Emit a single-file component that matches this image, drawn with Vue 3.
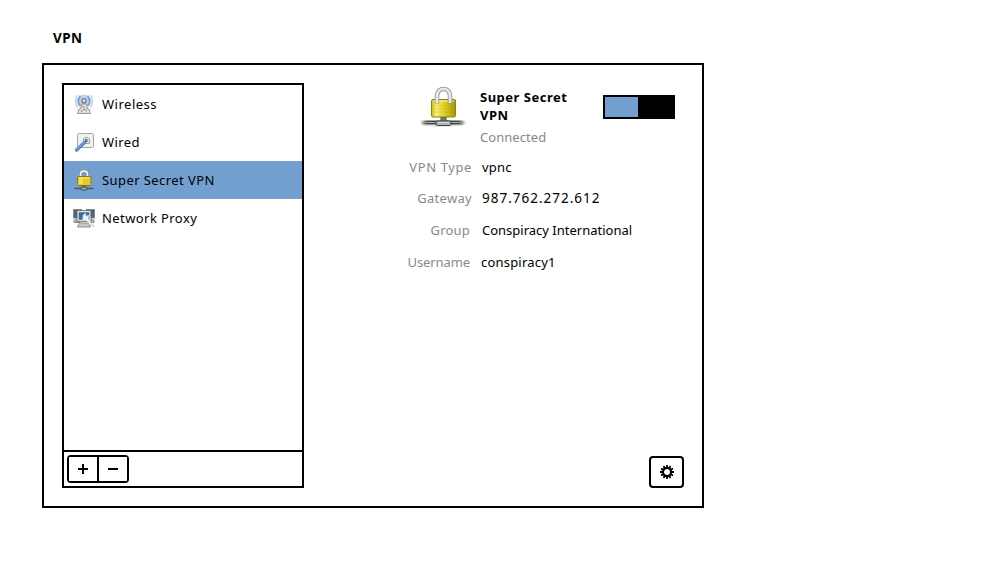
<script setup>
const connections = [
  { name: 'Wireless', icon: 'wireless' },
  { name: 'Wired', icon: 'wired' },
  { name: 'Super Secret VPN', icon: 'vpn', selected: true },
  { name: 'Network Proxy', icon: 'proxy' },
]
const details = [
  { key: 'type', label: 'VPN Type', value: 'vpnc' },
  { key: 'gateway', label: 'Gateway', value: '987.762.272.612' },
  { key: 'group', label: 'Group', value: 'Conspiracy International' },
  { key: 'user', label: 'Username', value: 'conspiracy1' },
]
</script>

<template>
  <main class="page">
    <h1>VPN</h1>
    <section class="window">
      <aside class="sidebar">
        <ul class="list">
          <li v-for="c in connections" :key="c.icon" :class="['row', c.icon, { selected: c.selected }]">
            <svg v-if="c.icon === 'wireless'" class="icon" viewBox="0 0 24 24" fill="none">
              <ellipse cx="12" cy="9" rx="7" ry="6.500" fill="#c3d6ee" />
              <path d="M5.500 3C3 6 3 12 5.500 15.500M18.500 3c2.500 3 2.500 9 0 12.500" stroke="#c3d4ea" stroke-width="1.600" />
              <path d="M8.500 4C6 7 6 11 8 14M15.500 4c2.500 3 2.500 7 .5 10" stroke="#84a9d8" stroke-width="2.200" />
              <path d="M9.500 12h5l1 5h1.500l1.500 4.500H5.500L7 17h1.500z" fill="#dededb" stroke="#999a96" />
              <path d="M9 20l3-3 3 2M10 14l3 2" stroke="#8f918e" />
              <circle cx="12" cy="8.700" r="2.200" fill="#d5d7d5" stroke="#737876" stroke-width="1.200" />
            </svg>
            <svg v-else-if="c.icon === 'wired'" class="icon" viewBox="0 0 24 24" fill="none">
              <rect x="5.500" y="3.500" width="16" height="14" rx="1" fill="#f1f1ef" stroke="#a5a7a2" />
              <path d="M11.500 13.500V9l1.500-1.500h3L17.500 9v4.500z" fill="#dfe2e4" stroke="#a1a6ab" />
              <path d="M3.500 21L13.500 11.500" stroke="#4c7fbc" stroke-width="3.200" />
              <path d="M4 20L13 11.500" stroke="#79a4d5" stroke-width="1.200" />
              <rect x="13" y="9" width="2.500" height="3" fill="#5379a3" />
            </svg>
            <svg v-else-if="c.icon === 'vpn'" class="icon" viewBox="0 0 24 24" fill="none">
              <path d="M2.500 20.500h19" stroke="#4c5356" stroke-width="1.400" />
              <path d="M12 17v3" stroke="#555" stroke-width="3" />
              <rect x="9" y="19" width="6" height="3" rx="1" fill="#a6a9a7" stroke="#454b4d" />
              <path d="M8.500 9V6.500C8.500 2 15.500 2 15.500 6.500V9" stroke="#81857f" stroke-width="3" />
              <path d="M8.500 9V6.500C8.500 2 15.500 2 15.500 6.500V9" stroke="#f4f4f0" stroke-width="1.700" />
              <rect x="5.500" y="8.500" width="13.500" height="9" rx="1" fill="#e3ca32" stroke="#927909" />
              <path d="M7 10h10" stroke="#fff27c" />
              <path d="M7 11h4v5H7z" fill="#f1e252" />
            </svg>
            <svg v-else class="icon" viewBox="0 0 24 24" fill="none">
              <rect x="1.500" y="3.500" width="8" height="8.500" fill="#47657f" stroke="#868a87" />
              <rect x="14.500" y="3.500" width="8" height="8.500" fill="#47657f" stroke="#868a87" />
              <path d="M2 14h6v2.500H2zM16 14h6v2.500h-6z" fill="#bfc1be" stroke="#8b8e8a" />
              <rect x="6" y="5.500" width="12" height="9" fill="#396b9e" stroke="#e2e4e0" stroke-width="1.500" />
              <path d="M4.800 4.500h14.400v11H4.800z" stroke="#666b69" stroke-width=".8" />
              <path d="M7.500 17h9l2 4H5.500z" fill="#c9cbc7" stroke="#8d908c" />
              <path d="M11 9l2.500-2 .5 3 3-1-.5 4 6 8-4-2-5-5-3 1z" fill="#f3f4f1" stroke="#b5b7b2" stroke-width=".5" />
            </svg>
            <span>{{ c.name }}</span>
          </li>
        </ul>
        <footer class="tools">
          <div class="pair">
            <button aria-label="Add"><svg viewBox="0 0 12 12"><path d="M1 6h10M6 1v10" /></svg></button>
            <button aria-label="Remove"><svg viewBox="0 0 12 12"><path d="M1 6h10" /></svg></button>
          </div>
        </footer>
      </aside>
      <section class="panel">
        <header class="head">
          <svg class="lock" viewBox="0 0 48 44" fill="none">
            <defs>
              <linearGradient id="gold" x2="1">
                <stop stop-color="#c6b70c" /><stop offset=".18" stop-color="#f9f074" />
                <stop offset=".5" stop-color="#e2d42a" /><stop offset="1" stop-color="#a99605" />
              </linearGradient>
              <linearGradient id="wire" x2="1">
                <stop stop-color="#555" stop-opacity="0" /><stop offset=".15" stop-color="#444a4a" />
                <stop offset=".85" stop-color="#444a4a" /><stop offset="1" stop-color="#555" stop-opacity="0" />
              </linearGradient>
            </defs>
            <ellipse cx="24" cy="38.500" rx="21" ry="2.500" fill="#e2e2e2" />
            <rect x="1" y="34.500" width="46" height="4" fill="url(#wire)" />
            <path d="M6 36.500h36" stroke="#a5a8a6" />
            <path d="M22 31h5v5h-5z" fill="#777c79" stroke="#454a48" />
            <rect x="17" y="35" width="15" height="4.500" rx="1.500" fill="#aeb1ae" stroke="#404644" />
            <path d="M19 36.500h11" stroke="#dcdedb" />
            <rect x="12.500" y="13.500" width="24" height="17.500" rx="1.500" fill="url(#gold)" stroke="#928108" />
            <path d="M14 15h21" stroke="#fff9a0" />
            <path d="M14 20h21M14 23h21M14 26h21" stroke="#a99908" stroke-opacity=".25" />
            <path d="M18 17.500V10C18 .500 31 .500 31 10V17.500" stroke="#91938f" stroke-width="4.500" />
            <path d="M18 17V10C18 .500 31 .500 31 10V17" stroke="#e9eae7" stroke-width="2.800" />
          </svg>
          <div class="title">
            <h2>Super Secret<br><span class="second">VPN</span></h2>
            <p>Connected</p>
          </div>
          <div class="switch" role="switch" aria-checked="true"><i></i></div>
        </header>
        <dl>
          <div v-for="d in details" :key="d.key" :class="['detail', d.key]">
            <dt>{{ d.label }}</dt><dd>{{ d.value }}</dd>
          </div>
        </dl>
        <button class="gear" aria-label="Options">
          <svg viewBox="0 0 16 16">
            <circle cx="8" cy="8" r="4.100" fill="none" stroke="#000" stroke-width="2.200" />
            <path d="M8 1v3M8 12v3M1 8h3M12 8h3M4.500 2l1.400 2.400M10.100 11.600l1.400 2.400M11.500 2l-1.400 2.400M5.900 11.600L4.500 14M2 4.500l2.400 1.400M11.600 10.100l2.400 1.400M2 11.500l2.400-1.400M11.600 5.900L14 4.500" stroke="#000" stroke-width="1.800" />
          </svg>
        </button>
      </section>
    </section>
  </main>
</template>

<style>
body { background: #fff; }
</style>
<style scoped>
* { box-sizing: border-box; }
h1, h2, p, ul, dl, dd { margin: 0; padding: 0; }
.page { width: 1002px; height: 583px; padding: 28px 0 0 42px; font: 13px/20px "Noto Sans", sans-serif; color: #000; }
h1 { height: 35px; padding-left: 11px; font-size: 13.500px; line-height: 20px; font-weight: 700; letter-spacing: .4px; }
.window { width: 662px; height: 445px; border: 2px solid #000; padding: 18px; display: flex; }
.sidebar { width: 242px; height: 405px; border: 2px solid #000; display: flex; flex-direction: column; }
.list { flex: 1; list-style: none; }
.row { height: 38px; display: flex; align-items: center; padding-left: 8px; white-space: nowrap; letter-spacing: .42px; }
.row.wireless { letter-spacing: .5px; }
.row span { padding-left: 6px; }
.selected { background: #729fcf; }
.icon { width: 24px; height: 24px; flex: none; }
.tools { height: 36px; border-top: 2px solid #000; padding: 3px; }
.pair { width: 62px; height: 28px; display: flex; border: 2px solid #000; border-radius: 4px; }
button { margin: 0; padding: 0; background: #fff; border: 0; display: flex; align-items: center; justify-content: center; }
.pair button { flex: 1; }
.pair button + button { border-left: 2px solid #000; }
.pair svg { width: 12px; height: 12px; stroke: #000; stroke-width: 2; }
.panel { flex: 1; display: flex; flex-direction: column; }
.head { height: 68px; display: flex; padding-left: 115px; }
.lock { width: 48px; height: 44px; margin-top: 3px; flex: none; }
.title { width: 136px; padding: 6px 0 0 13px; }
h2 { font-size: 13px; line-height: 17.500px; font-weight: 700; letter-spacing: .5px; white-space: nowrap; }
.title p { color: #888a85; line-height: 20px; margin-top: 3px; letter-spacing: .05px; }
.switch { width: 72px; height: 24px; margin-top: 12px; padding: 2px; background: #000; }
.switch i { display: block; width: 33px; height: 20px; background: #729fcf; }
.detail { height: 31.670px; display: flex; white-space: nowrap; padding-top: 6px; letter-spacing: .2px; }
dt { width: 168px; text-align: right; color: #888a85; }
dd { margin-left: 10px; }
.type dt { letter-spacing: .6px; }
.gateway { padding-top: 5px; }
.gateway dt { letter-spacing: .3px; }
.gateway dd { font-size: 13.500px; letter-spacing: 1px; }
.group dt, .user dt { width: 166px; }
.group dd { margin-left: 12px; letter-spacing: 0; }
.user dd { margin-left: 11px; }
.user dt { letter-spacing: -.1px; }
.gear { width: 35px; height: 32px; margin: auto 0 0 345px; border: 2px solid #000; border-radius: 4px; }
.gear svg { width: 16px; height: 16px; }
</style>
